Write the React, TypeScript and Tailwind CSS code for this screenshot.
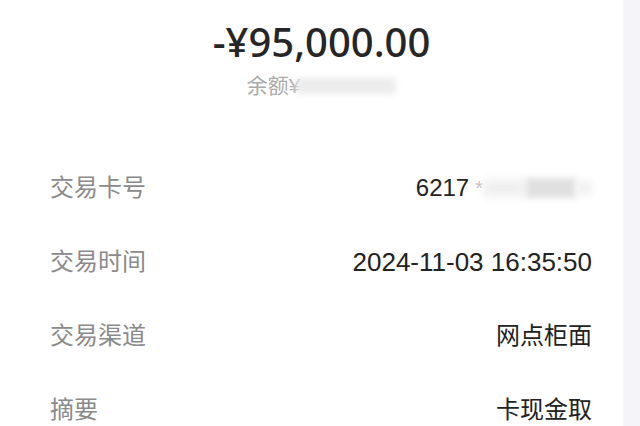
const rows = [
  { label: '交易时间', value: '2024-11-03 16:35:50', num: true },
  { label: '交易渠道', value: '网点柜面', num: false },
  { label: '摘要', value: '卡现金取', num: false },
];

function App() {
  return (
    <div
      className="flex h-[426px] w-[640px] overflow-hidden bg-white"
      style={{ fontFamily: '"Liberation Sans", "Noto Sans CJK SC", sans-serif' }}
    >
      <main className="flex-1">
        <div className="flex flex-col items-center pt-[18px] pl-[20px]">
          <div
            className="text-[40px] leading-[48px] font-medium text-[#262626]"
            style={{ fontFamily: '"Noto Sans", "Noto Sans CJK SC", sans-serif' }}
          >
            -¥95,000.00
          </div>
          <div className="mt-2 flex h-6 items-center text-[21px] leading-6 text-[#aaa]">
            <span>余额¥</span>
            <span className="ml-[-4px] h-[16px] w-[100px] bg-[#ececec] blur-[3px]" />
          </div>
        </div>

        <div className="mt-[53px] pl-[50px] pr-[31px]">
          <div className="flex h-[74px] items-center justify-between">
            <span className="text-[24px] text-[#8a8a8a]">交易卡号</span>
            <div className="flex items-center text-[24px] text-[#222]">
              <span>6217</span>
              <span className="ml-1.5 text-[20px] text-[#bbb]">*</span>
              <span className="h-[18px] w-[43px] bg-[#f0f0f0] blur-[4px]" />
              <span className="h-[20px] w-[50px] bg-[#e0e0e0] blur-[3px]" />
              <span className="h-[14px] w-[16px] bg-[#f2f2f2] blur-[3px]" />
            </div>
          </div>
          {rows.map((row) => (
            <div key={row.label} className="flex h-[74px] items-center justify-between">
              <span className="text-[24px] text-[#8a8a8a]">{row.label}</span>
              <span className={row.num ? 'text-[26px] text-[#222]' : 'text-[24px] text-[#222]'}>
                {row.value}
              </span>
            </div>
          ))}
        </div>
      </main>
      <aside className="w-[17px] bg-[#f4f4f9]" />
    </div>
  );
}

export default App;
